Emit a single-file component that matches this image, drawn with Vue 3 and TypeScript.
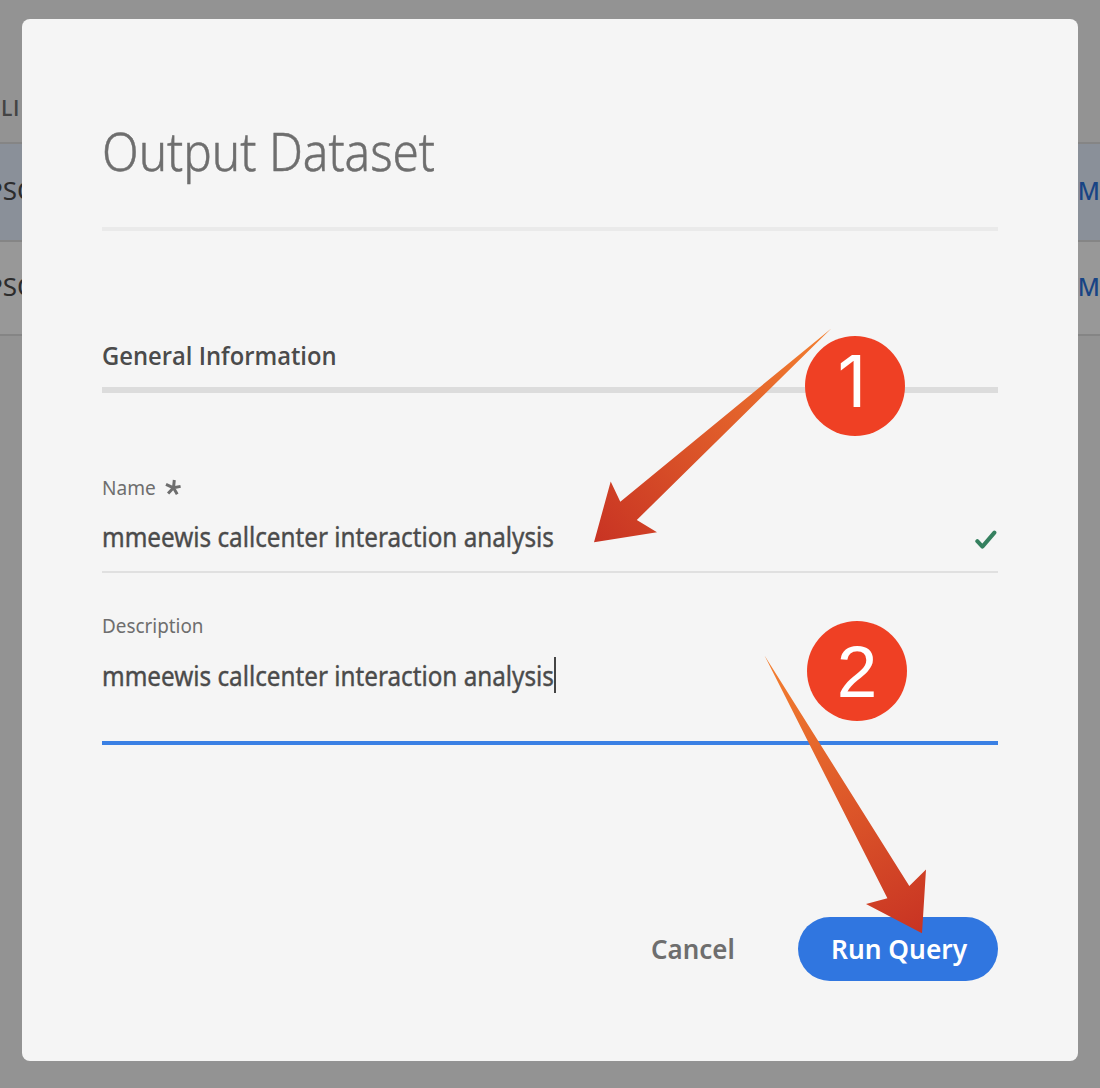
<script setup lang="ts">
import { ref } from 'vue'

interface Row {
  id: number
  left: string
  right: string
  selected: boolean
}

const rows: Row[] = [
  { id: 1, left: 'PSQ', right: 'M', selected: true },
  { id: 2, left: 'PSQ', right: 'M', selected: false },
]

const name = ref('mmeewis callcenter interaction analysis')
const description = ref('mmeewis callcenter interaction analysis')
</script>

<template>
  <div class="page">
    <div class="table">
      <div class="thead"><span>LI</span></div>
      <div v-for="row in rows" :key="row.id" class="row" :class="{ selected: row.selected }">
        <span class="client">{{ row.left }}</span>
        <span class="link">{{ row.right }}</span>
      </div>
    </div>

    <section class="dialog" role="dialog">
      <header class="title"><span class="fit">Output Dataset</span></header>
      <h2 class="section"><span class="fit">General Information</span></h2>

      <div class="label">
        <span class="fit name-label">Name</span>
        <svg class="asterisk" width="16" height="17" viewBox="0 0 16 17">
          <path
            d="M8.5 8.8L9.3 1M8.5 8.8L15.6 7.4M8.5 8.8L12.2 15.2M8.5 8.8L3.1 14.6M8.5 8.8L1 5.3"
            fill="none" stroke="#6e6e6e" stroke-width="3"
          />
        </svg>
      </div>
      <div class="field">
        <span class="fit value">{{ name }}</span>
        <svg class="check" width="22" height="20" viewBox="0 0 22 20">
          <path d="M2.3 11.2L7.4 16.6L19.4 2.6" fill="none" stroke="#35805f" stroke-width="4" stroke-linecap="round" stroke-linejoin="round" />
        </svg>
      </div>

      <div class="label second"><span class="fit desc-label">Description</span></div>
      <div class="field area">
        <span class="fit value">{{ description }}</span>
        <i class="caret"></i>
      </div>

      <footer class="actions">
        <button class="cancel"><span class="fit">Cancel</span></button>
        <button class="run"><span class="fit">Run Query</span></button>
      </footer>
    </section>

    <svg class="arrows" width="1100" height="1088" viewBox="0 0 1100 1088">
      <defs>
        <linearGradient id="g1" gradientUnits="userSpaceOnUse" x1="831" y1="329" x2="594" y2="542">
          <stop offset="0" stop-color="#f48030" />
          <stop offset="1" stop-color="#c83323" />
        </linearGradient>
        <linearGradient id="g2" gradientUnits="userSpaceOnUse" x1="765" y1="656" x2="922" y2="933">
          <stop offset="0" stop-color="#f48030" />
          <stop offset="1" stop-color="#c83323" />
        </linearGradient>
      </defs>
      <path d="M831.3 328.4L620.3 501.7L610.7 481.5L594 542.3L657 532.3L636.8 520Z" fill="url(#g1)" />
      <path d="M764.5 655.5L909.3 886L926 869.5L922 933.3L866 904L887.4 898.3Z" fill="url(#g2)" />
    </svg>
    <div class="badge one"><span>1</span></div>
    <div class="badge two"><span>2</span></div>
  </div>
</template>

<style>
body {
  margin: 0;
  overflow: hidden;
}
</style>

<style scoped>
.page {
  position: relative;
  width: 1100px;
  height: 1088px;
  overflow: hidden;
  background: #939393;
  font-family: 'Noto Sans', 'Open Sans', sans-serif;
}
.thead {
  box-sizing: border-box;
  height: 144px;
  padding: 94px 0 0 1px;
  border-bottom: 2px solid #858585;
  font-family: 'Open Sans', sans-serif;
  font-size: 21px;
  line-height: 29px;
  font-weight: 600;
  letter-spacing: 0.5px;
  color: #444;
}
.row {
  box-sizing: border-box;
  height: 94px;
  display: flex;
  justify-content: space-between;
  align-items: center;
  padding-bottom: 4px;
  border-bottom: 2px solid #858585;
  background: #989898;
  font-size: 26px;
}
.row.selected {
  height: 98px;
  background: #8a9099;
}
.client {
  margin-left: -13px;
  color: #2c2c2c;
}
.link {
  margin-right: -1px;
  color: #184484;
  font-weight: 500;
  transform: scaleX(0.93);
}
.dialog {
  position: absolute;
  left: 22px;
  top: 19px;
  box-sizing: border-box;
  width: 1056px;
  height: 1042px;
  padding: 101px 80px 0;
  border-radius: 8px;
  background: #f5f5f5;
}
.fit {
  display: inline-block;
  white-space: nowrap;
  transform-origin: 0 50%;
}
.title {
  height: 61px;
  padding-bottom: 46px;
  border-bottom: 4px solid #eaeaea;
  font-size: 53px;
  line-height: 61px;
  font-weight: 300;
  color: #6e6e6e;
}
.title .fit {
  transform: scaleX(0.9);
  -webkit-text-stroke: 0.5px #6e6e6e;
}
.section {
  height: 32px;
  margin: 108px 0 0;
  padding-bottom: 16px;
  border-bottom: 6px solid #dcdcdc;
  font-family: 'Open Sans', sans-serif;
  font-size: 26px;
  line-height: 32px;
  font-weight: 600;
  color: #4b4b4b;
}
.section .fit {
  transform: scaleX(0.915);
}
.label {
  display: flex;
  height: 28px;
  margin-top: 80px;
  font-size: 20.5px;
  line-height: 28px;
  color: #6e6e6e;
}
.label.second {
  margin-top: 38px;
}
.name-label {
  width: 63px;
  transform: scaleX(0.93);
}
.desc-label {
  transform: scaleX(0.92);
}
.asterisk {
  margin-top: 6px;
}
.field {
  display: flex;
  justify-content: space-between;
  height: 36px;
  margin-top: 17px;
  padding-bottom: 17px;
  border-bottom: 2px solid #e0e0e0;
  font-size: 27px;
  line-height: 38px;
  color: #4b4b4b;
}
.value {
  width: 452px;
  transform: scaleX(0.898);
  -webkit-text-stroke: 0.4px #4b4b4b;
}
.check {
  margin: 12px 1px 0 0;
}
.area {
  justify-content: flex-start;
  margin-top: 18px;
  padding-bottom: 48px;
  border-bottom: 4px solid #3a80e4;
  line-height: 37px;
}
.caret {
  width: 2px;
  height: 36px;
  background: #444;
}
.actions {
  display: flex;
  justify-content: flex-end;
  height: 64px;
  margin-top: 172px;
}
button {
  box-sizing: border-box;
  height: 64px;
  border: 0;
  padding: 0 0 0 33px;
  font: 600 27px/64px 'Noto Sans', 'Open Sans', sans-serif;
  text-align: left;
}
.cancel {
  width: 181px;
  padding-left: 34px;
  background: none;
  color: #6e6e6e;
}
.cancel .fit {
  transform: scaleX(0.96);
}
.run {
  width: 200px;
  border-radius: 32px;
  background: #3076e0;
  color: #fff;
}
.run .fit {
  transform: scaleX(0.975);
}
.arrows {
  position: absolute;
  left: 0;
  top: 0;
}
.badge {
  position: absolute;
  box-sizing: border-box;
  width: 100px;
  height: 100px;
  border-radius: 50%;
  background: #ef4024;
  color: #fff;
  font: 400 73px/102px 'Liberation Sans', Arial, sans-serif;
  text-align: center;
}
.one {
  left: 805px;
  top: 336px;
  padding-right: 6px;
  font: 400 71px/91px Inter, sans-serif;
}
.two {
  left: 807px;
  top: 621px;
}
</style>
